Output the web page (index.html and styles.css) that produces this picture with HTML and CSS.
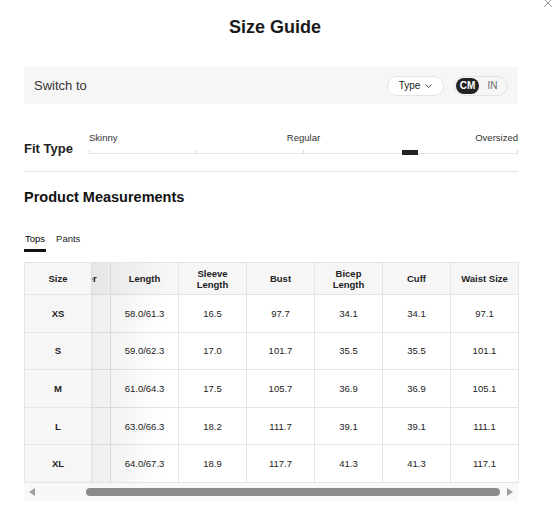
FILE: index.html
```html
<!DOCTYPE html>
<html lang="en">
<head>
<meta charset="utf-8">
<title>Size Guide</title>
<link rel="stylesheet" href="styles.css">
</head>
<body>
<div class="page">
  <svg class="close" width="10" height="10" viewBox="0 0 10 10"><path d="M1 1L9 9M9 1L1 9" stroke="#9a9a9a" stroke-width="1" fill="none"/></svg>
  <h1 class="title">Size Guide</h1>

  <div class="switch">
    <span class="switch-label">Switch to</span>
    <div class="controls">
      <div class="type-pill">Type <svg width="7" height="4" viewBox="0 0 7 4"><polyline points="0.5,0.5 3.5,3.5 6.5,0.5" fill="none" stroke="#333" stroke-width="0.9"/></svg></div>
      <div class="unit-toggle"><span class="unit active">CM</span><span class="unit">IN</span></div>
    </div>
  </div>

  <div class="fit">
    <div class="fit-label">Fit Type</div>
    <div class="fit-track">
      <div class="fit-names"><span>Skinny</span><span>Regular</span><span class="last">Oversized</span></div>
      <div class="rail">
        <div class="line"></div>
        <div class="ticks"><i></i><i></i><i></i><i></i><i></i></div>
        <div class="marker"></div>
      </div>
    </div>
  </div>

  <h2 class="section-title">Product Measurements</h2>
  <div class="tabs"><span class="tab active">Tops</span><span class="tab">Pants</span></div>

  <div class="table-wrap">
    <table class="measure">
      <colgroup><col class="c-size"><col class="c-clip"><col class="c-val"><col class="c-val"><col class="c-val"><col class="c-val"><col class="c-val"><col class="c-val"></colgroup>
      <tr class="head">
        <th class="size">Size</th><th class="clip"><div class="clip-inner">Shoulder</div></th><th>Length</th><th>Sleeve<br>Length</th><th>Bust</th><th>Bicep<br>Length</th><th>Cuff</th><th>Waist Size</th>
      </tr>
      <tr class="row"><td class="size">XS</td><td class="clip"></td><td>58.0/61.3</td><td>16.5</td><td>97.7</td><td>34.1</td><td>34.1</td><td>97.1</td></tr>
      <tr class="row"><td class="size">S</td><td class="clip"></td><td>59.0/62.3</td><td>17.0</td><td>101.7</td><td>35.5</td><td>35.5</td><td>101.1</td></tr>
      <tr class="row"><td class="size">M</td><td class="clip"></td><td>61.0/64.3</td><td>17.5</td><td>105.7</td><td>36.9</td><td>36.9</td><td>105.1</td></tr>
      <tr class="row"><td class="size">L</td><td class="clip"></td><td>63.0/66.3</td><td>18.2</td><td>111.7</td><td>39.1</td><td>39.1</td><td>111.1</td></tr>
      <tr class="row"><td class="size">XL</td><td class="clip"></td><td>64.0/67.3</td><td>18.9</td><td>117.7</td><td>41.3</td><td>41.3</td><td>117.1</td></tr>
    </table>
    <div class="shadow"></div>
  </div>

  <div class="scrollbar">
    <div class="sb-btn left"><svg width="6" height="8" viewBox="0 0 6 8"><polygon points="6,0 6,8 0,4" fill="#a0a0a0"/></svg></div>
    <div class="sb-track"><div class="sb-thumb"></div></div>
    <div class="sb-btn right"><svg width="6" height="8" viewBox="0 0 6 8"><polygon points="0,0 0,8 6,4" fill="#a0a0a0"/></svg></div>
  </div>
</div>
</body>
</html>
```
FILE: styles.css
```css
* { box-sizing: border-box; }
html, body { margin: 0; background: #fff; }
body {
  font-family: "Liberation Sans", Arial, sans-serif;
  color: #222;
}
.page {
  position: relative;
  width: 542px;
  padding: 16px 24px 0;
}
.close {
  position: absolute;
  left: 543px;
  top: -2px;
}
.title {
  margin: 0;
  padding-left: 8px;
  font-size: 18px;
  line-height: 22px;
  font-weight: bold;
  text-align: center;
  color: #1a1a1a;
}
.switch {
  margin-top: 29px;
  height: 37px;
  background: #f6f6f6;
  display: flex;
  align-items: center;
  justify-content: space-between;
  padding: 0 10px;
}
.switch-label {
  font-size: 13px;
  color: #333;
}
.controls {
  display: flex;
  align-items: center;
  gap: 10px;
}
.type-pill {
  width: 57px;
  height: 20px;
  border: 1px solid #e5e5e5;
  border-radius: 10px;
  background: #fff;
  display: flex;
  align-items: center;
  justify-content: center;
  gap: 5px;
  font-size: 10px;
  color: #222;
}
.unit-toggle {
  width: 54px;
  height: 20px;
  border: 1px solid #e3e3e3;
  border-radius: 10px;
  padding: 0 1px;
  display: flex;
  align-items: center;
}
.unit {
  height: 16px;
  line-height: 16px;
  font-size: 10px;
  text-align: center;
  flex: 1;
  color: #666;
}
.unit.active {
  flex: 0 0 23px;
  background: #222;
  color: #fff;
  font-weight: bold;
  border-radius: 8px;
}
.fit {
  margin-top: 28px;
  height: 40px;
  display: flex;
  align-items: flex-end;
  padding-bottom: 14px;
  border-bottom: 1px solid #e5e5e5;
}
.fit-label {
  flex: 0 0 65px;
  height: 16px;
  font-size: 13px;
  line-height: 16px;
  font-weight: bold;
  color: #222;
}
.fit-track {
  flex: 1;
  height: 25px;
}
.fit-names {
  display: grid;
  grid-template-columns: 1fr auto 1fr;
  height: 12px;
  font-size: 9.5px;
  line-height: 12px;
  color: #333;
}
.fit-names .last { justify-self: end; }
.rail {
  position: relative;
  height: 13px;
}
.line {
  position: absolute;
  left: 0;
  right: 0;
  top: 9px;
  height: 1px;
  background: #e5e5e5;
}
.ticks {
  position: absolute;
  left: 0;
  right: 0;
  top: 6px;
  height: 3px;
  display: flex;
  justify-content: space-between;
}
.ticks i {
  width: 1px;
  height: 3px;
  background: #d6d6d6;
}
.marker {
  position: absolute;
  left: 75%;
  top: 6px;
  width: 16px;
  height: 5px;
  margin-left: -9px;
  background: #222;
}
.section-title {
  margin: 16px 0 0;
  font-size: 14.5px;
  line-height: 18px;
  font-weight: bold;
  color: #111;
}
.tabs {
  margin-top: 27px;
  display: flex;
  gap: 9px;
  font-size: 9.5px;
  line-height: 12px;
}
.tab {
  padding: 0 1px 4px;
  border-bottom: 3px solid transparent;
  color: #222;
}
.tab.active {
  border-bottom-color: #111;
  color: #000;
}
.table-wrap {
  position: relative;
  margin-top: 10px;
}
.measure {
  width: 494px;
  border-collapse: collapse;
  table-layout: fixed;
  font-size: 9.5px;
  color: #222;
}
.c-size { width: 67px; }
.c-clip { width: 19px; }
.c-val { width: 68px; }
.measure th, .measure td {
  border: 1px solid #e5e5e5;
  text-align: center;
  padding: 0;
  overflow: hidden;
}
.measure th {
  background: #f6f6f6;
  font-weight: bold;
  line-height: 11px;
}
.measure tr.head { height: 32px; }
.measure tr.row { height: 37.6px; }
.measure td.size {
  background: #f6f6f6;
  font-weight: bold;
  border-right-color: #dedede;
}
.measure th.size { border-right-color: #dedede; }
.clip-inner {
  width: 68px;
  margin-left: -50px;
  white-space: nowrap;
}
.shadow {
  position: absolute;
  top: 1px;
  bottom: 1px;
  left: 68px;
  width: 72px;
  background: linear-gradient(to right, rgba(0,0,0,0.065), rgba(0,0,0,0));
  pointer-events: none;
}
.scrollbar {
  display: flex;
  align-items: center;
  height: 18px;
  background: #f8f8f8;
}
.sb-btn {
  flex: 0 0 14px;
  height: 18px;
  display: flex;
  align-items: center;
  justify-content: center;
}
.sb-btn.left { padding-left: 2px; }
.sb-btn.right { padding-right: 2px; }
.sb-track {
  flex: 1;
  padding: 0 4px 0 48px;
}
.sb-thumb {
  height: 8px;
  border-radius: 4px;
  background: #8b8b8b;
}
```
